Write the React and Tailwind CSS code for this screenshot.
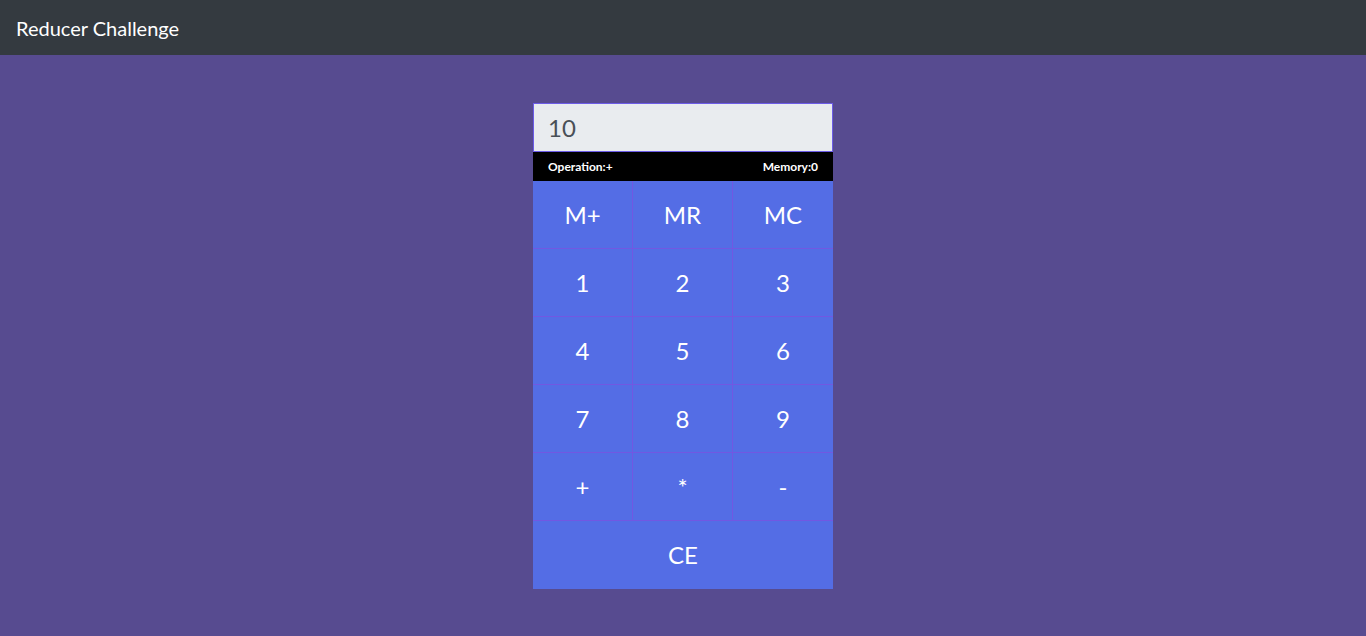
import React from "react";

const keys = ["M+", "MR", "MC", "1", "2", "3", "4", "5", "6", "7", "8", "9", "+", "*", "-"];

export default function App() {
  return (
    <div className="min-h-[636px] bg-[#574b90]" style={{ fontFamily: "Lato, 'Open Sans', sans-serif" }}>
      <nav className="h-[55px] bg-[#343a40] flex items-center px-4">
        <span className="text-white text-[20px] leading-none">Reducer Challenge</span>
      </nav>
      <div className="flex justify-center pt-12">
        <div className="w-[300px]">
          <div className="h-[49px] bg-[#e9ecef] border border-[#6c5ce7] flex items-center px-[14px] text-[24px] text-[#495057]">
            10
          </div>
          <div className="h-[29px] bg-black flex items-center justify-between px-[15px] text-white text-[12px] font-bold">
            <span>Operation:+</span>
            <span>Memory:0</span>
          </div>
          <div className="grid grid-cols-3 bg-[#546de5]">
            {keys.map((k, i) => (
              <button
                key={k}
                className={
                  "h-[68px] flex items-center justify-center text-white text-[24px] border-b border-[#7158e2] " +
                  (i % 3 !== 2 ? "border-r" : "")
                }
              >
                {k}
              </button>
            ))}
            <button className="col-span-3 h-[68px] flex items-center justify-center text-white text-[24px]">CE</button>
          </div>
        </div>
      </div>
    </div>
  );
}
